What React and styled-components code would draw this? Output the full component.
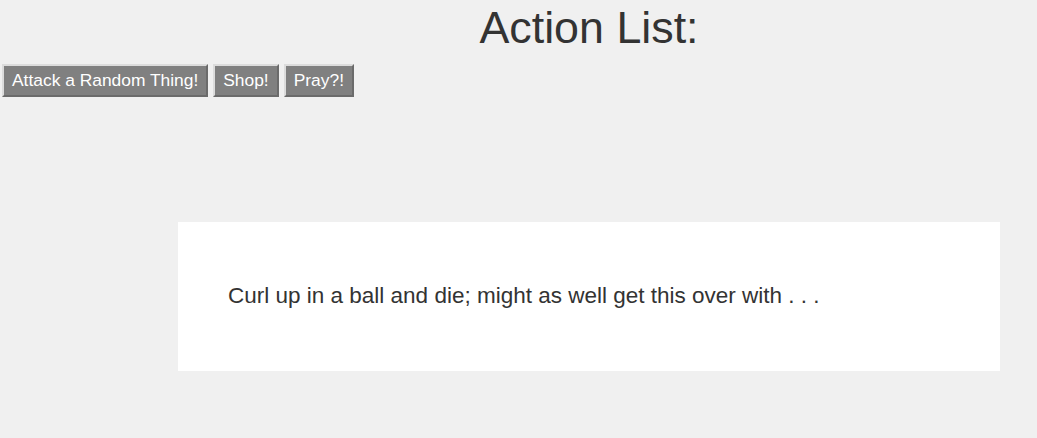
import React from "react";
import styled, { createGlobalStyle } from "styled-components";

const GlobalStyle = createGlobalStyle`
  html, body {
    margin: 0;
    padding: 0;
    background: #f0f0f0;
  }
  body {
    font-family: "Liberation Sans", Arial, sans-serif;
    color: #333333;
  }
`;

const Page = styled.div`
  width: 1037px;
  height: 438px;
  padding-top: 1px;
  box-sizing: border-box;
`;

const Title = styled.h1`
  margin: 0 0 0 178px;
  width: 822px;
  text-align: center;
  font-size: 44.8px;
  font-weight: 400;
  line-height: 52px;
  color: #333333;
`;

const ActionBar = styled.div`
  display: flex;
  gap: 5px;
  margin: 11px 0 0 2px;
`;

const ActionButton = styled.button`
  font-family: "Liberation Sans", Arial, sans-serif;
  font-size: 17.4px;
  line-height: 19px;
  padding: 5px 8px;
  color: #ffffff;
  background-color: #808080;
  border: 2px solid;
  border-color: #dcdcdc #6b6b6b #6b6b6b #dcdcdc;
  cursor: pointer;
`;

const Panel = styled.div`
  margin: 125px 0 0 178px;
  width: 822px;
  height: 149px;
  box-sizing: border-box;
  background: #ffffff;
  padding: 61px 50px 0;
`;

const Message = styled.p`
  margin: 0;
  font-size: 22.5px;
  line-height: 26px;
  color: #333333;
`;

const actions = ["Attack a Random Thing!", "Shop!", "Pray?!"];

export default function App() {
  return (
    <Page>
      <GlobalStyle />
      <Title>Action List:</Title>
      <ActionBar>
        {actions.map((a) => (
          <ActionButton key={a}>{a}</ActionButton>
        ))}
      </ActionBar>
      <Panel>
        <Message>
          Curl up in a ball and die; might as well get this over with . . .
        </Message>
      </Panel>
    </Page>
  );
}
